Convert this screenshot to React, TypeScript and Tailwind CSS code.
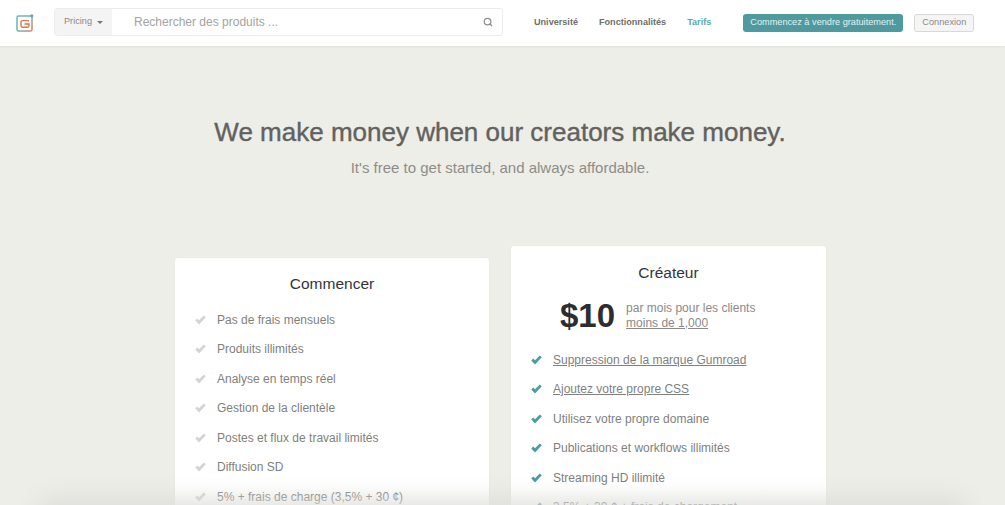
import { Search } from "lucide-react";

const gratuit = [
  "Pas de frais mensuels",
  "Produits illimités",
  "Analyse en temps réel",
  "Gestion de la clientèle",
  "Postes et flux de travail limités",
  "Diffusion SD",
  "5% + frais de charge (3,5% + 30 ¢)",
];

const createur = [
  { label: "Suppression de la marque Gumroad", lien: true },
  { label: "Ajoutez votre propre CSS", lien: true },
  { label: "Utilisez votre propre domaine", lien: false },
  { label: "Publications et workflows illimités", lien: false },
  { label: "Streaming HD illimité", lien: false },
  // coupé par le bas de la capture : seul le haut des lettres se voit, la fin du libellé est supposée
  { label: "3,5% + 30 ¢ + frais de chargement", lien: false },
];

function Coche({ active }: { active?: boolean }) {
  return (
    <svg viewBox="0 0 12 10" className={`h-[10px] w-[11px] shrink-0 ${active ? "fill-[#4a9ea3]" : "fill-[#d4d4d2]"}`}>
      <path d="M0.3 5.6 L2.4 3.4 L4.4 5.2 L9.6 0 L11.8 2.1 L4.4 10 Z" />
    </svg>
  );
}

function Logo() {
  return (
    <svg viewBox="0 0 18 18" className="h-[18px] w-[18px] shrink-0" fill="none">
      <defs>
        <linearGradient id="bord" x1="0" y1="0" x2="1" y2="1">
          <stop offset="0" stopColor="#6fb6c6" />
          <stop offset="0.55" stopColor="#6fb0a8" />
          <stop offset="1" stopColor="#e2805f" />
        </linearGradient>
      </defs>
      <path d="M15.5 2 H2.5 Q1 2 1 3.5 V15.5 Q1 17 2.5 17 H14.5 Q16 17 16 15.5 V2.5" stroke="url(#bord)" strokeWidth="1.5" />
      <path d="M13 6.6 H6.4 Q5 6.6 5 8 V11.6 Q5 13.2 6.4 13.2 H11.6 Q13 13.2 13 11.6 V10 H8.5" stroke="#e2714e" strokeWidth="1.4" />
      <circle cx="15.8" cy="1.8" r="1.6" fill="#6d9fd0" />
    </svg>
  );
}

export default function App() {
  return (
    <div className="relative h-[505px] overflow-hidden bg-[#eeeee9] font-['Liberation_Sans',Arial,sans-serif]">
      <header className="flex h-[46px] items-center bg-white pl-4 shadow-[0_1px_2px_rgba(0,0,0,0.06)]">
        <Logo />
        <div className="mb-[2px] ml-[20px] flex h-[28px] w-[449px] shrink-0 overflow-hidden rounded-[3px] border border-[#ecece8] bg-white">
          <div className="flex w-[57px] items-center justify-center gap-[5px] bg-[#f4f4f4] text-[9.2px] text-[#8a8a88]">
            Pricing
            <span className="mt-[1px] h-0 w-0 border-x-[3px] border-t-[3px] border-x-transparent border-t-[#777]" />
          </div>
          <div className="flex flex-1 items-center justify-between pl-[22px] pr-[9px] text-[12px] text-[#a3a3a1]">
            Rechercher des produits ...
            <Search className="h-[10px] w-[10px] text-[#8f8f8f]" strokeWidth={3} />
          </div>
        </div>
        <nav className="ml-[31px] flex shrink-0 gap-[21px] text-[9.1px] font-bold text-[#6e6e6c]">
          <span>Université</span>
          <span>Fonctionnalités</span>
          <span className="text-[#5ba7ae]">Tarifs</span>
        </nav>
        <button className="ml-[32px] h-[18px] w-[160px] shrink-0 rounded-[3px] bg-[#4f9a9f] text-[9.2px] whitespace-nowrap text-[#e4f1f1]">
          Commencez à vendre gratuitement.
        </button>
        <button className="ml-[11px] h-[18px] w-[60px] shrink-0 rounded-[3px] border border-[#d8d8d8] bg-[#f5f5f5] text-[9.2px] text-[#8a8a88]">
          Connexion
        </button>
      </header>

      <section className="pt-[70px] pr-[5px] text-center">
        <h1 className="text-[26px] leading-[32px] font-normal text-[#61625d] [-webkit-text-stroke:0.4px_#61625d]">
          We make money when our creators make money.
        </h1>
        <p className="mt-[10px] text-[15px] leading-[20px] text-[#8c8d88]">It's free to get started, and always affordable.</p>
      </section>

      <section className="mt-[68px] flex items-start justify-center gap-[22px] pr-[4px]">
        <div className="mt-[12px] w-[314px] rounded-[3px] bg-white pt-[16px] pl-[20px] shadow-[0_0_2px_rgba(0,0,0,0.05)]">
          <h2 className="pr-[20px] text-center text-[15.5px] leading-[20px] text-[#33343a]">Commencer</h2>
          <ul className="mt-[11px]">
            {gratuit.map((item) => (
              <li key={item} className="flex h-[29.5px] items-center gap-[11px] text-[12px] text-[#7f7f7d]">
                <Coche />
                {item}
              </li>
            ))}
          </ul>
        </div>

        <div className="w-[315px] rounded-[3px] bg-white pt-[17px] pl-[20px] shadow-[0_0_2px_rgba(0,0,0,0.05)]">
          <h2 className="pr-[20px] text-center text-[15.5px] leading-[20px] text-[#33343a]">Créateur</h2>
          <div className="mt-[11px] ml-[29px] flex items-center gap-[11px]">
            <span className="text-[33px] leading-[44px] font-bold text-[#2c2d33]">$10</span>
            <p className="text-[12px] leading-[15px] text-[#8a8a88]">
              par mois pour les clients
              <br />
              <span className="underline">moins de 1,000</span>
            </p>
          </div>
          <ul className="mt-[7px]">
            {createur.map((item) => (
              <li key={item.label} className="flex h-[29.5px] items-center gap-[11px] text-[12px] text-[#7f7f7d]">
                <Coche active />
                <span className={item.lien ? "underline" : ""}>{item.label}</span>
              </li>
            ))}
          </ul>
        </div>
      </section>

      <div className="absolute inset-x-0 bottom-0 h-[20px] bg-gradient-to-b from-transparent to-[#eeeee9]/60" />
      <div className="absolute top-[510px] right-[50px] left-[50px] h-[20px] shadow-[0_0_30px_10px_rgba(0,0,0,0.08)]" />
    </div>
  );
}
